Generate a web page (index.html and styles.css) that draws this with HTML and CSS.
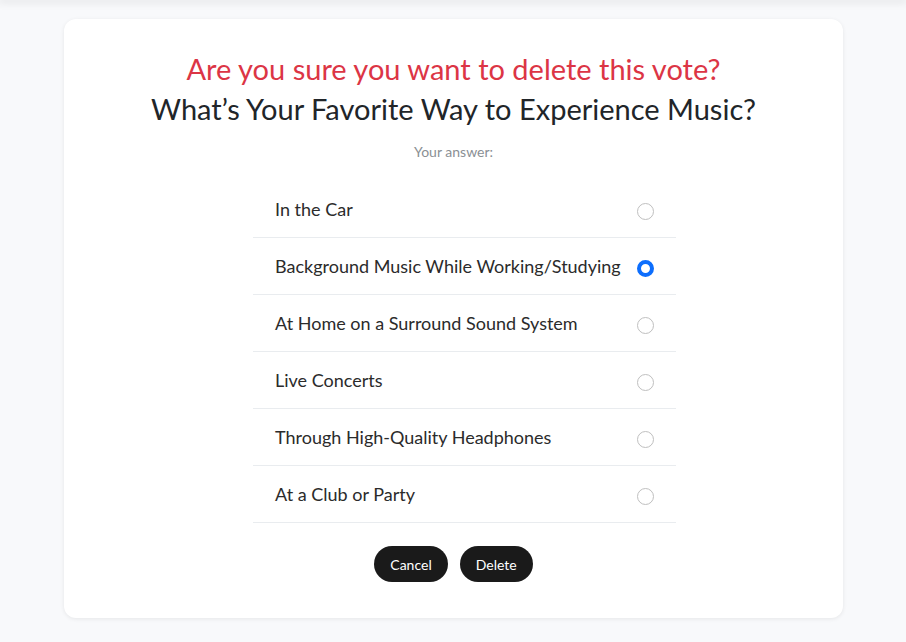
FILE: index.html
```html
<!DOCTYPE html>
<html lang="en">
<head>
<meta charset="utf-8">
<title>Delete vote</title>
<link rel="stylesheet" href="styles.css">
</head>
<body>
<div class="topbar"></div>
<main class="page">
  <section class="card">
    <h2 class="warn">Are you sure you want to delete this vote?</h2>
    <h1 class="question">What’s Your Favorite Way to Experience Music?</h1>
    <p class="label">Your answer:</p>
    <ul class="options">
      <li class="option"><span>In the Car</span><span class="radio"></span></li>
      <li class="option"><span>Background Music While Working/Studying</span><span class="radio checked"></span></li>
      <li class="option"><span>At Home on a Surround Sound System</span><span class="radio"></span></li>
      <li class="option"><span>Live Concerts</span><span class="radio"></span></li>
      <li class="option"><span>Through High-Quality Headphones</span><span class="radio"></span></li>
      <li class="option"><span>At a Club or Party</span><span class="radio"></span></li>
    </ul>
    <div class="actions">
      <button class="btn">Cancel</button>
      <button class="btn">Delete</button>
    </div>
  </section>
</main>
</body>
</html>
```
FILE: styles.css
```css
* { box-sizing: border-box; }
html, body { margin: 0; height: 100%; }
body {
  background: #f8f9fb;
  font-family: "Lato", "Noto Sans", sans-serif;
  color: #212529;
  overflow: hidden;
}
.topbar {
  height: 0;
  box-shadow: 0 0 8px 2px rgba(0,0,0,0.12);
}
.page {
  padding: 19px 63px 0 64px;
}
.card {
  background: #fff;
  border-radius: 12px;
  box-shadow: 0 1px 4px rgba(0,0,0,0.08);
  height: 599px;
  padding: 32px 0 0;
  display: flex;
  flex-direction: column;
  align-items: center;
}
.warn {
  margin: 0;
  font-weight: 400;
  font-size: 29px;
  line-height: 36px;
  color: #dc3545;
}
.question {
  margin: 4px 0 0;
  font-weight: 400;
  font-size: 29px;
  line-height: 36px;
  color: #212529;
}
.label {
  margin: 16px 0 0;
  font-size: 14px;
  line-height: 18px;
  color: #8a8f94;
}
.options {
  list-style: none;
  margin: 20px 0 0 22px;
  padding: 0;
  width: 423px;
}
.option {
  display: flex;
  align-items: center;
  justify-content: space-between;
  height: 57px;
  padding: 0 22px;
  border-bottom: 1px solid #e9ecef;
  font-size: 18px;
  color: #2b2b2b;
}
.radio {
  width: 17px;
  height: 17px;
  border-radius: 50%;
  border: 1px solid #bfbfbf;
  flex-shrink: 0;
  margin-top: 4px;
}
.radio.checked {
  border: 4.5px solid #0d6efd;
  background: #fff;
}
.actions {
  display: flex;
  gap: 12px;
  margin-top: 23px;
}
.btn {
  background: #1a1a1a;
  color: #fff;
  border: none;
  border-radius: 18px;
  height: 36px;
  padding: 0 16px;
  font-family: inherit;
  font-size: 14px;
}
```
